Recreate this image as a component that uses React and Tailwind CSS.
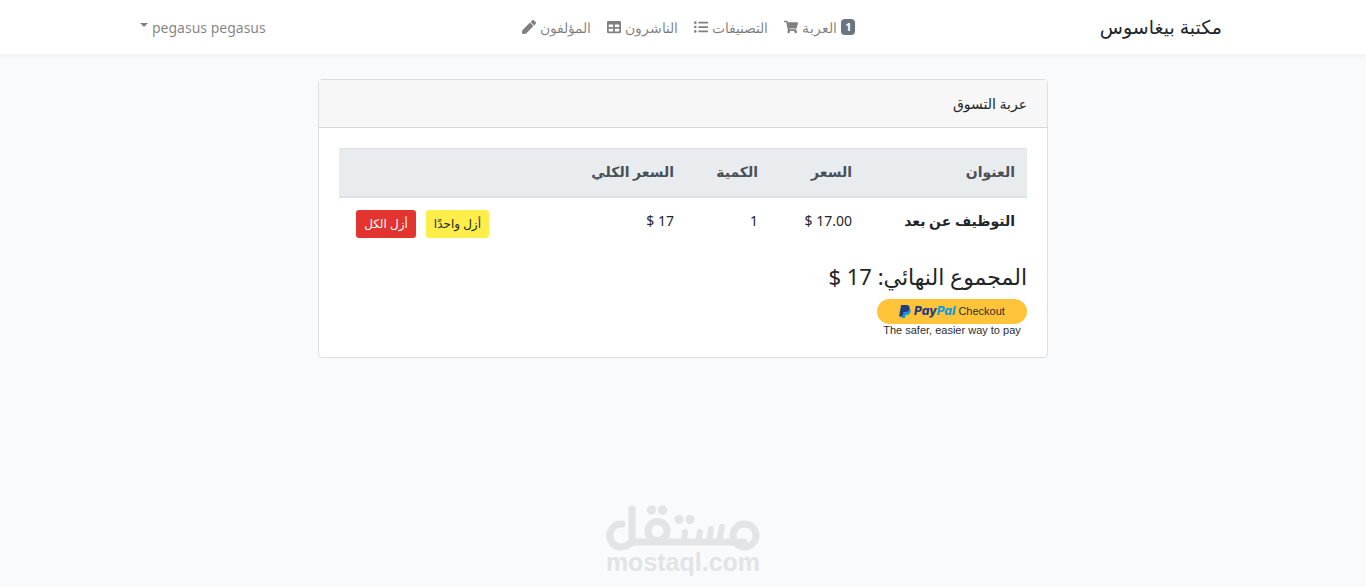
import React from "react";
import { FaShoppingCart, FaListUl, FaTable, FaPen } from "react-icons/fa";

const navLinks = [
    { id: "cart", label: "العربة", icon: FaShoppingCart, count: 1 },
    { id: "categories", label: "التصنيفات", icon: FaListUl },
    { id: "publishers", label: "الناشرون", icon: FaTable },
    { id: "authors", label: "المؤلفون", icon: FaPen },
];

const cartItems = [
    { id: 1, title: "التوظيف عن بعد", price: 17, quantity: 1 },
];

const Navbar = () => (
    <nav className="bg-white shadow-[0_2px_4px_rgba(0,0,0,0.04)] border-b border-gray-100">
        <div className="mx-auto max-w-[1110px] h-[54px] pr-4 pl-3 flex items-center justify-between">
            <a href="#home" className="text-[19px] text-[#212529]">مكتبة بيغاسوس</a>
            <ul className="flex items-center gap-4 pl-3">
                {navLinks.map(({ id, label, icon: Icon, count }) => (
                    <li key={id}>
                        <a href={`#${id}`} className="flex items-center gap-1 font-light text-black/50 hover:text-black/70">
                            {count && (
                                <span className="rounded bg-[#6c757d] px-1 text-[11px] leading-4 font-bold text-white">
                                    {count}
                                </span>
                            )}
                            {label}
                            <Icon size={14} />
                        </a>
                    </li>
                ))}
            </ul>
            <button type="button" className="flex items-center gap-1 text-black/50">
                pegasus pegasus
                <svg width="8" height="4" viewBox="0 0 8 4" className="mb-1" aria-hidden="true">
                    <path d="M0 0h8L4 4z" fill="currentColor" />
                </svg>
            </button>
        </div>
    </nav>
);

const PaypalMark = () => (
    <svg width="12" height="13" viewBox="0 0 24 26" aria-hidden="true">
        <path d="M8 6h11c4 1 5 4 4 8-1 4-4 6-8 6h-2l-1 6H5z" fill="#179bd7" />
        <path d="M5 0h10c5 0 7 3 6 8-1 4-4 6-9 6H9l-2 9H0L4 1z" fill="#253b80" />
    </svg>
);

const PaypalButton = () => (
    <div className="w-[150px] text-center font-['Liberation_Sans',sans-serif]" dir="ltr">
        <button
            type="button"
            className="flex h-[25px] w-full items-center justify-center gap-[3px] rounded-full bg-[#ffc439] text-[11px] text-[#2c2e2f]"
        >
            <PaypalMark />
            <span className="font-['Inter',sans-serif] text-[12px] font-extrabold italic text-[#253b80]">
                Pay<span className="text-[#179bd7]">Pal</span>
            </span>
            Checkout
        </button>
        <p className="text-[11px] leading-[13px] text-[#2c2e2f]">The safer, easier way to pay</p>
    </div>
);

const CartTable = () => (
    <table className="mb-4 w-full table-fixed text-right">
        <thead className="border-t border-b-2 border-t-[#dee2e6] border-b-[#dee2e6] bg-[#e9ecef] text-[#495057]">
            <tr className="h-12">
                <th scope="col" className="w-[163px] px-3 pb-[2px] font-semibold">العنوان</th>
                <th scope="col" className="w-[94px] px-3 pb-[2px] font-semibold">السعر</th>
                <th scope="col" className="w-[84px] px-3 pb-[2px] font-semibold">الكمية</th>
                <th scope="col" className="w-[185px] px-3 pb-[2px] font-semibold">السعر الكلي</th>
                <td></td>
            </tr>
        </thead>
        <tbody>
            {cartItems.map((item) => (
                <tr key={item.id} className="h-[50px] align-top">
                    <th scope="row" className="px-3 pt-3 font-semibold">{item.title}</th>
                    <td className="px-3 pt-3">{item.price.toFixed(2)} $</td>
                    <td className="px-3 pt-3">{item.quantity}</td>
                    <td className="px-3 pt-3">{item.price * item.quantity} $</td>
                    <td className="px-3 pt-3">
                        <div className="flex gap-[10px] text-[12px]">
                            <button type="button" className="h-7 rounded-[3px] bg-[#ffed4a] px-2 whitespace-nowrap text-[#212529]">
                                أزل واحدًا
                            </button>
                            <button type="button" className="h-7 rounded-[3px] bg-[#e3342f] px-2 whitespace-nowrap text-white">
                                أزل الكل
                            </button>
                        </div>
                    </td>
                </tr>
            ))}
        </tbody>
    </table>
);

const MostaqlLogo = () => (
    <div className="flex flex-col items-center text-[#e3e4e6]" dir="ltr">
        <svg
            width="154"
            height="46"
            viewBox="0 0 154 46"
            fill="none"
            stroke="currentColor"
            strokeWidth="7"
            strokeLinecap="round"
            role="img"
            aria-label="مستقل"
        >
            <path d="M16 19A11.5 11.5 0 1 0 23 39L27 37H138" />
            <path d="M26 4V37" />
            <circle cx="51.5" cy="26" r="9.5" />
            <path d="M79 27L78 37M94 27L92 37M105 24L103 37M116 22L113 37" strokeWidth="6" />
            <circle cx="138.5" cy="30.5" r="11.5" />
            <g fill="currentColor" stroke="none">
                <circle cx="45.5" cy="5" r="4.7" />
                <circle cx="56.5" cy="5" r="4.7" />
                <circle cx="73" cy="14.5" r="4.5" />
                <circle cx="84" cy="14.5" r="4.5" />
            </g>
        </svg>
        <span className="font-['Liberation_Sans',sans-serif] text-[25px] leading-[22px] font-bold">mostaql.com</span>
    </div>
);

const App = () => {
    const total = cartItems.reduce((sum, item) => sum + item.price * item.quantity, 0);

    return (
        <div
            dir="rtl"
            className="flex min-h-screen flex-col bg-[#f8fafc] font-['Noto_Sans','DejaVu_Sans',sans-serif] text-[14px] text-[#212529]"
        >
            <Navbar />
            <main className="mx-auto w-full max-w-[730px] py-6">
                <section className="rounded border border-[#dfdfdf] bg-white">
                    <h2 className="border-b border-[#d8d8d8] bg-[#f7f7f7] px-5 py-3 leading-[23px]">عربة التسوق</h2>
                    <div className="p-5">
                        <CartTable />
                        <h4 className="mb-[10px] text-[22px] leading-[26px]">المجموع النهائي: {total} $</h4>
                        <PaypalButton />
                    </div>
                </section>
            </main>
            <footer className="mt-auto pb-[14px]">
                <MostaqlLogo />
            </footer>
        </div>
    );
};

export default App;
